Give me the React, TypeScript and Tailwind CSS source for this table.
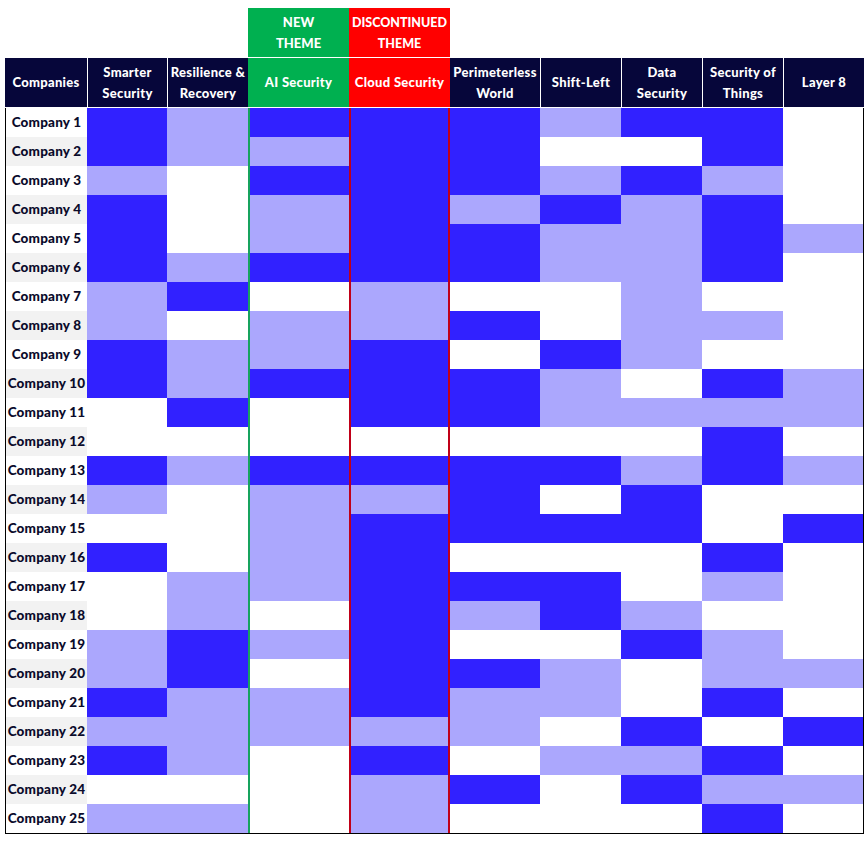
import React from 'react';

// D = strong, L = partial, W = none
const companyRows = [
  'DLDDDLDDW',
  'DLLDDWWDW',
  'LWDDDLDLW',
  'DWLDLDLDW',
  'DWLDDLLDL',
  'DLDDDLLDW',
  'LDWLWWLWW',
  'LWLLDWLLW',
  'DLLDWDLWW',
  'DLDDDLWDL',
  'WDWDDLLLL',
  'WWWWWWWDW',
  'DLDDDDLDL',
  'LWLLDWDWW',
  'WWLDDDDWD',
  'DWLDWWWDW',
  'WLLDDDWLW',
  'WLWDLDLWW',
  'LDLDWWDLW',
  'LDWDDLWLL',
  'DLLDLLWDW',
  'LLLLLWDWD',
  'DLWDWLLDW',
  'WWWLDWDLL',
  'LLWLWWWDW',
];

const cellColor: Record<string, string> = {
  D: 'bg-[#3121ff]',
  L: 'bg-[#aba7fd]',
  W: 'bg-white',
};

const font = { fontFamily: 'Lato, "Noto Sans", sans-serif' };

function HeaderCell({ children, className = '' }: { children: React.ReactNode; className?: string }) {
  return (
    <div className={`flex items-center justify-center text-center text-white font-black tracking-[0.3px] text-[13px] leading-[21px] ${className}`}>
      <div>{children}</div>
    </div>
  );
}

export default function App() {
  return (
    <div className="bg-white w-[868px] h-[844px] pl-[5px] pt-[8px]" style={font}>
      {/* Theme labels */}
      <div className="grid grid-cols-[82px_80px_81px_101px_101px_90px_81px_81px_81px_81px] h-[49px]">
        <div className="col-start-4 bg-[#00b050] flex items-center justify-center text-center text-white font-black text-[13px] leading-[21px]">
          <div>NEW<br />THEME</div>
        </div>
        <div className="bg-[#ff0000] flex items-center justify-center text-center text-white font-black text-[12.5px] leading-[21px]">
          <div>DISCONTINUED<br />THEME</div>
        </div>
      </div>

      {/* Column headers */}
      <div className="mt-px grid grid-cols-[82px_80px_81px_101px_101px_90px_81px_81px_81px_81px] h-[49px]">
        <HeaderCell className="bg-[#06063a]">Companies</HeaderCell>
        <HeaderCell className="bg-[#06063a] border-l border-white">Smarter<br />Security</HeaderCell>
        <HeaderCell className="bg-[#06063a] border-l border-white">Resilience &amp;<br />Recovery</HeaderCell>
        <HeaderCell className="bg-[#00b050]">AI Security</HeaderCell>
        <HeaderCell className="bg-[#ff0000]">Cloud Security</HeaderCell>
        <HeaderCell className="bg-[#06063a]">Perimeterless<br />World</HeaderCell>
        <HeaderCell className="bg-[#06063a] border-l border-white">Shift-Left</HeaderCell>
        <HeaderCell className="bg-[#06063a] border-l border-white">Data<br />Security</HeaderCell>
        <HeaderCell className="bg-[#06063a] border-l border-white">Security of<br />Things</HeaderCell>
        <HeaderCell className="bg-[#06063a] border-l border-white">Layer 8</HeaderCell>
      </div>

      {/* Body */}
      <div className="mt-px w-[859px] border border-t-0 border-black grid grid-cols-[81px_80px_81px_101px_101px_90px_81px_81px_81px_80px]">
        {companyRows.map((row, i) => (
          <React.Fragment key={i}>
            <div
              className={`h-[29px] flex items-center justify-center text-[13.5px] font-black tracking-[0.2px] text-[#0b0b2b] ${
                i % 2 === 1 ? 'bg-[#f2f2f2]' : 'bg-white'
              }`}
            >
              Company {i + 1}
            </div>
            {row.split('').map((v, j) => (
              <div
                key={j}
                className={`h-[29px] ${cellColor[v]} ${
                  j === 2 ? 'border-l-2 border-[#17a35e]' : ''
                } ${j === 3 ? 'border-x-2 border-[#c00018]' : ''}`}
              />
            ))}
          </React.Fragment>
        ))}
      </div>
    </div>
  );
}
